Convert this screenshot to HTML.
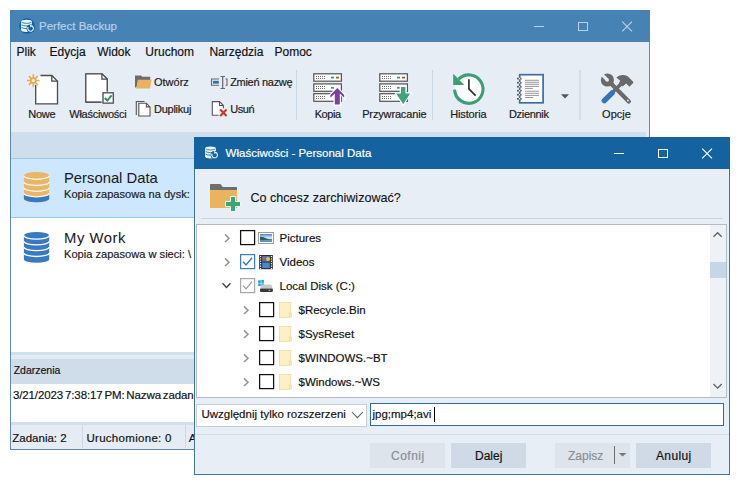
<!DOCTYPE html>
<html><head><meta charset="utf-8">
<style>
*{margin:0;padding:0;box-sizing:border-box}
html,body{width:743px;height:488px;overflow:hidden;background:#fff;font-family:"Liberation Sans",sans-serif;color:#1a1a1a}
.a{position:absolute}
.t{position:absolute;white-space:nowrap;line-height:1;font-family:"Liberation Sans",sans-serif;-webkit-text-stroke:0.18px currentColor}
svg{position:absolute;overflow:visible}
</style></head><body>

<!-- ============ MAIN WINDOW ============ -->
<div class="a" style="left:10px;top:10px;width:640px;height:440px;background:#e6edf5;border:1px solid #6489b0"></div>
<!-- title bar -->
<div class="a" style="left:10px;top:10px;width:640px;height:32px;background:#4682b4"></div>
<div class="t" style="left:39px;top:21.3px;font-size:11.5px;color:#b9d1ea">Perfect Backup</div>

<svg width="743" height="488" style="left:0;top:0">
 <rect x="534" y="26" width="10" height="1" fill="#b9d1ea"/>
 <rect x="578.5" y="22.5" width="9" height="8" fill="none" stroke="#b9d1ea" stroke-width="1"/>
 <path d="M622.2,21.6 L632,31.4 M632,21.6 L622.2,31.4" stroke="#b9d1ea" stroke-width="1.1"/>
</svg>
<!-- menu -->
<div class="t" style="left:16.5px;top:45.6px;font-size:12px;color:#111">Plik</div>
<div class="t" style="left:49.6px;top:45.6px;font-size:12px;color:#111">Edycja</div>
<div class="t" style="left:97.2px;top:45.6px;font-size:12px;color:#111">Widok</div>
<div class="t" style="left:145.3px;top:45.6px;font-size:12px;color:#111">Uruchom</div>
<div class="t" style="left:209.4px;top:45.6px;font-size:12px;color:#111">Narzędzia</div>
<div class="t" style="left:274.5px;top:45.6px;font-size:12px;color:#111">Pomoc</div>


<!-- ribbon labels -->
<div class="t" style="left:28.2px;top:108.8px;font-size:11px;letter-spacing:-0.25px;color:#1a1a1a">Nowe</div>
<div class="t" style="left:69.3px;top:108.8px;font-size:11px;letter-spacing:-0.25px;color:#1a1a1a">Właściwości</div>
<div class="t" style="left:154px;top:77.4px;font-size:11px;color:#1a1a1a">Otwórz</div>
<div class="t" style="left:154px;top:104.1px;font-size:11px;letter-spacing:-0.25px;color:#1a1a1a">Duplikuj</div>
<div class="t" style="left:230.2px;top:77.4px;font-size:11px;letter-spacing:-0.3px;color:#1a1a1a">Zmień nazwę</div>
<div class="t" style="left:230.2px;top:104.1px;font-size:11px;letter-spacing:-0.4px;color:#1a1a1a">Usuń</div>
<div class="t" style="left:314.7px;top:108.8px;font-size:11px;letter-spacing:-0.4px;color:#1a1a1a">Kopia</div>
<div class="t" style="left:362.2px;top:108.8px;font-size:11px;letter-spacing:-0.15px;color:#1a1a1a">Przywracanie</div>
<div class="t" style="left:450.2px;top:108.8px;font-size:11px;letter-spacing:-0.13px;color:#1a1a1a">Historia</div>
<div class="t" style="left:508.9px;top:108.8px;font-size:11px;letter-spacing:-0.3px;color:#1a1a1a">Dziennik</div>
<div class="t" style="left:602.1px;top:108.8px;font-size:11px;color:#1a1a1a">Opcje</div>

<!-- header strip -->
<div class="a" style="left:11px;top:132px;width:635px;height:26px;background:#cedeec"></div>
<!-- list white -->
<div class="a" style="left:11px;top:158px;width:638px;height:194px;background:#fff"></div>
<!-- selected item -->
<div class="a" style="left:11px;top:158px;width:638px;height:60px;background:#cde8fe;border-top:1px solid #99c9ef;border-bottom:1px solid #99c9ef"></div>
<div class="t" style="left:64px;top:170.5px;font-size:14.8px;-webkit-text-stroke:0.05px;color:#1a1a1a">Personal Data</div>
<div class="t" style="left:64px;top:188.6px;font-size:11.1px;color:#1a1a1a">Kopia zapasowa na dysk:</div>
<div class="t" style="left:64px;top:230.5px;font-size:14.8px;letter-spacing:0.55px;-webkit-text-stroke:0.05px;color:#1a1a1a">My Work</div>
<div class="t" style="left:64px;top:248.6px;font-size:11.1px;color:#1a1a1a">Kopia zapasowa w sieci: \</div>

<!-- splitter -->
<div class="a" style="left:11px;top:352px;width:638px;height:3px;background:#d2dfec"></div>
<div class="a" style="left:11px;top:355px;width:638px;height:4px;background:#e3ebf4"></div>
<div class="a" style="left:11px;top:359px;width:638px;height:25px;background:#cfdcea"></div>
<div class="t" style="left:13.7px;top:364.7px;font-size:10.5px;color:#111">Zdarzenia</div>
<div class="a" style="left:11px;top:384px;width:638px;height:38px;background:#fff"></div>
<div class="t" style="left:12.9px;top:390px;font-size:11.5px;letter-spacing:-0.1px;word-spacing:-1.3px;color:#111">3/21/2023 7:38:17 PM: Nazwa zadania</div>
<!-- status -->
<div class="a" style="left:11px;top:422px;width:638px;height:26px;background:#e6ecf4;border-top:3px solid #d5dfeb"></div>
<div class="t" style="left:12.3px;top:433px;font-size:11.5px;color:#111">Zadania: 2</div>
<div class="a" style="left:82px;top:425px;width:1px;height:23px;background:#cdd8e4"></div>
<div class="t" style="left:86.4px;top:433px;font-size:11.5px;letter-spacing:0.3px;color:#111">Uruchomione: 0</div>
<div class="a" style="left:185px;top:425px;width:1px;height:23px;background:#cdd8e4"></div>
<div class="t" style="left:188.7px;top:433px;font-size:11.5px;color:#111">Aktywne</div>


<!-- main window icons -->
<svg width="743" height="488" style="left:0;top:0" viewBox="0 0 743 488">
 <!-- title icon -->
 <circle cx="27" cy="26" r="7.7" fill="#12609f"/>
 <path d="M21.1,21.70 A5.4,1.9 0 0 1 31.90,21.70 L31.90,30.00 A5.4,1.9 0 0 1 21.1,30.00Z" fill="#eaf6ff"/>
 <g fill="none" stroke="#12609f" stroke-width="0.8">
  <path d="M21.70,22.30 A5.4,1.9 0 0 0 31.30,22.30"/>
  <path d="M21.70,24.90 A5.4,1.9 0 0 0 31.30,24.90"/>
  <path d="M21.70,27.60 A5.4,1.9 0 0 0 31.30,27.60"/>
 </g>
 <circle cx="30.60" cy="28.40" r="4" fill="#12609f"/>
 <path d="M32.00,25.98 A2.8,2.8 0 1 1 28.18,27.00" fill="none" stroke="#eaf6ff" stroke-width="1.1"/>
 <path d="M30.00,24.50 L32.80,25.80 L30.40,27.50Z" fill="#eaf6ff"/>

 <!-- Nowe doc -->
 <path d="M40.5,75.5 L51.8,75.5 L57.5,81.2 L57.5,103.8 L35.7,103.8 L35.7,85" fill="#fff" stroke="#4b4b4b" stroke-width="1.3"/>
 <path d="M35.7,84 L35.7,80 L40,75.5" fill="#fff" stroke="none"/>
 <path d="M51.8,75.5 L51.8,81.2 L57.5,81.2" fill="none" stroke="#4b4b4b" stroke-width="1.3"/>
 <g stroke="#e9a94c" stroke-width="1.5">
  <line x1="33.3" y1="74.2" x2="33.3" y2="86.8"/>
  <line x1="27" y1="80.5" x2="39.6" y2="80.5"/>
  <line x1="28.9" y1="76.1" x2="37.7" y2="84.9"/>
  <line x1="28.9" y1="84.9" x2="37.7" y2="76.1"/>
 </g>
 <circle cx="33.3" cy="80.5" r="3.3" fill="#e9a94c"/>
 <circle cx="33.3" cy="80.5" r="1.5" fill="#fdf6ea"/>
 <!-- Wlasciwosci doc -->
 <path d="M85.8,73.8 L101.9,73.8 L107.2,79.1 L107.2,91.5 M101.5,102 L85.8,102 L85.8,73.8" fill="#fff" stroke="#4b4b4b" stroke-width="1.3"/>
 <rect x="85.8" y="73.8" width="16" height="28.2" fill="#fff"/>
 <path d="M85.8,102 L85.8,73.8 L101.9,73.8 L107.2,79.1 L107.2,91.5" fill="#fff" stroke="#4b4b4b" stroke-width="1.3"/>
 <path d="M85.8,102 L101.5,102" stroke="#4b4b4b" stroke-width="1.3"/>
 <path d="M101.9,73.8 L101.9,79.1 L107.2,79.1" fill="none" stroke="#4b4b4b" stroke-width="1.3"/>
 <rect x="103" y="92.8" width="10.3" height="10.3" fill="#fff" stroke="#4b4b4b" stroke-width="1.3"/>
 <path d="M104.8,98 L107.3,100.6 L111.6,95.3" fill="none" stroke="#2e8d64" stroke-width="2"/>

 <!-- Otworz folder -->
 <path d="M135,87.8 L135,75.4 L141,75.4 L142.3,76.8 L150.2,76.8 L150.2,80 L135,87.8Z" fill="#6c6c6c"/>
 <path d="M137.8,79.8 L151.6,79.8 L150,88.6 L136.2,88.6Z" fill="#e8b25f"/>
 <!-- Duplikuj -->
 <path d="M136.3,115 L136.3,101.5 L144.5,101.5" fill="none" stroke="#555" stroke-width="1.1"/>
 <path d="M138.8,103.3 L146.4,103.3 L150,106.9 L150,116 L138.8,116Z" fill="#fff" stroke="#555" stroke-width="1.1"/>
 <path d="M146.4,103.3 L146.4,106.9 L150,106.9" fill="none" stroke="#555" stroke-width="1.1"/>
 <!-- Zmien nazwe -->
 <path d="M219,79 L211.5,79 L211.5,85.3 L219,85.3 M225.5,79 L227,79 L227,85.3 L225.5,85.3" fill="none" stroke="#666" stroke-width="1.1"/>
 <rect x="213" y="80.8" width="5.8" height="2.8" fill="#2f6db5"/>
 <path d="M222.7,76.5 L222.7,88.5 M220.5,76.5 L225,76.5 M220.5,88.5 L225,88.5" fill="none" stroke="#666" stroke-width="1.2"/>
 <!-- Usun -->
 <path d="M212.3,101.6 L219.5,101.6 L223.4,105.5 L223.4,108.6 L219.2,108.6 L219.2,115.2 L212.3,115.2Z" fill="#fff" stroke="none"/>
 <path d="M223.4,108.2 L223.4,105.5 L219.5,101.6 L212.3,101.6 L212.3,115.2 L218.6,115.2" fill="none" stroke="#555" stroke-width="1.1"/>
 <path d="M219.5,101.6 L219.5,105.5 L223.4,105.5" fill="none" stroke="#555" stroke-width="1.1"/>
 <path d="M220.2,109.6 L226.6,115.9 M226.6,109.6 L220.2,115.9" stroke="#c8392b" stroke-width="2.1"/>
 <!-- separators -->
 <rect x="296" y="70" width="1" height="50" fill="#c9d6e3"/>
 <rect x="432" y="70" width="1" height="50" fill="#c9d6e3"/>
 <rect x="579" y="70" width="2" height="50" fill="#d2e0ec"/>

 <!-- Kopia server -->
 <g id="srv">
  <g fill="#fff" stroke="#575757" stroke-width="1.25">
   <rect x="313.8" y="73.8" width="27.6" height="7.4"/>
   <rect x="313.8" y="83.9" width="27.6" height="7.4"/>
   <rect x="313.8" y="93.7" width="27.6" height="7.6"/>
  </g>
  <g fill="#707070"><rect x="316" y="76" width="1" height="1"/><rect x="318" y="76" width="1" height="1"/><rect x="320" y="76" width="1" height="1"/><rect x="322" y="76" width="1" height="1"/><rect x="324" y="76" width="1" height="1"/><rect x="316" y="78" width="1" height="1"/><rect x="318" y="78" width="1" height="1"/><rect x="320" y="78" width="1" height="1"/><rect x="322" y="78" width="1" height="1"/><rect x="324" y="78" width="1" height="1"/><rect x="316" y="86" width="1" height="1"/><rect x="318" y="86" width="1" height="1"/><rect x="320" y="86" width="1" height="1"/><rect x="322" y="86" width="1" height="1"/><rect x="324" y="86" width="1" height="1"/><rect x="316" y="88" width="1" height="1"/><rect x="318" y="88" width="1" height="1"/><rect x="320" y="88" width="1" height="1"/><rect x="322" y="88" width="1" height="1"/><rect x="324" y="88" width="1" height="1"/><rect x="316" y="96" width="1" height="1"/><rect x="318" y="96" width="1" height="1"/><rect x="320" y="96" width="1" height="1"/><rect x="322" y="96" width="1" height="1"/><rect x="324" y="96" width="1" height="1"/><rect x="316" y="98" width="1" height="1"/><rect x="318" y="98" width="1" height="1"/><rect x="320" y="98" width="1" height="1"/><rect x="322" y="98" width="1" height="1"/><rect x="324" y="98" width="1" height="1"/></g>
  <rect x="331" y="76.7" width="3" height="1.8" fill="#3e9a74"/>
  <rect x="336" y="76.7" width="3" height="1.8" fill="#b5553a"/>
  <rect x="331" y="86.9" width="3" height="1.8" fill="#3e9a74"/>
 </g>
 <path d="M337.3,87.5 L344.8,95.2 L344.8,98.5 L340.3,94 L340.3,105 L334.3,105 L334.3,94 L329.8,98.5 L329.8,95.2Z" fill="#fff" stroke="#fff" stroke-width="1.6"/>
 <path d="M337.3,87.9 L344.2,95 L344.2,97.8 L339.8,93.6 L339.8,104.6 L334.8,104.6 L334.8,93.6 L330.4,97.8 L330.4,95Z" fill="#7d3fa3"/>

 <!-- Przywracanie server -->
 <use href="#srv" x="66" y="0"/>
 <path d="M400.5,86.5 L406,86.5 L406,93 L410.8,93 L403.2,104.7 L395.6,93 L400.5,93Z" fill="#fff" stroke="#fff" stroke-width="1.6"/>
 <path d="M401,87 L405.4,87 L405.4,93.4 L410.2,93.4 L403.2,104.2 L396.2,93.4 L401,93.4Z" fill="#3fa67a"/>

 <!-- Historia clock -->
 <circle cx="468.8" cy="88.6" r="13.5" fill="#fff"/>
 <path d="M458.6,79.2 A14.2,14.2 0 1 1 454.6,89.6" fill="none" stroke="#38a071" stroke-width="3.1"/>
 <path d="M453.2,73.8 L464.4,84.9 L453.2,84.9Z" fill="#38a071"/>
 <path d="M468.9,79.3 L468.9,88.8 L475.6,95.6" fill="none" stroke="#333" stroke-width="1.7"/>
 <!-- Dziennik -->
 <rect x="519.7" y="74.7" width="23.4" height="28.1" fill="#fff" stroke="#3a6ea8" stroke-width="1.7"/>
 <g fill="#555">
  <rect x="517" y="77.8" width="4.6" height="1.6"/><rect x="517" y="81.9" width="4.6" height="1.6"/>
  <rect x="517" y="85.9" width="4.6" height="1.6"/><rect x="517" y="89.9" width="4.6" height="1.6"/>
  <rect x="517" y="93.9" width="4.6" height="1.6"/><rect x="517" y="98" width="4.6" height="1.6"/>
 </g>
 <g fill="#fff">
  <circle cx="519.5" cy="78.6" r="0.8"/><circle cx="519.5" cy="82.7" r="0.8"/><circle cx="519.5" cy="86.7" r="0.8"/>
  <circle cx="519.5" cy="90.7" r="0.8"/><circle cx="519.5" cy="94.7" r="0.8"/><circle cx="519.5" cy="98.8" r="0.8"/>
 </g>
 <g fill="#8a8a8a">
  <rect x="525" y="79.8" width="14" height="0.9"/><rect x="525" y="81.8" width="14" height="0.9"/>
  <rect x="525" y="83.8" width="14" height="0.9"/><rect x="525" y="85.9" width="14" height="0.9"/>
  <rect x="525" y="87.9" width="8" height="0.9"/>
  <rect x="525" y="90.7" width="14" height="0.9"/><rect x="525" y="92.8" width="14" height="0.9"/>
  <rect x="525" y="94.9" width="14" height="0.9"/><rect x="525" y="97.1" width="8" height="0.9"/>
 </g>
 <path d="M561,94.3 L569,94.3 L565,98.6Z" fill="#555"/>

 <!-- Opcje tools -->
 <path d="M621.5,83.5 L613.4,91.6" stroke="#6a6a6a" stroke-width="3.6"/>
 <path d="M612.2,92.8 L604.3,100.7" stroke="#3573ba" stroke-width="5.4" stroke-linecap="round"/>
 <path d="M616.3,77.6 Q621.8,73.2 628,76.6 L633.2,81.8 Q633.6,82.6 632.9,83.3 L629.4,86.8 L626.2,83.6 L622.6,86.6 L618.9,82.9 L620.3,80.8 Z" fill="#6a6a6a"/>
 <path d="M609.5,82 L628.8,101.4" stroke="#6a6a6a" stroke-width="4.3" stroke-linecap="round"/>
 <circle cx="607.4" cy="80" r="6.6" fill="#6a6a6a"/>
 <path d="M608.4,78.8 L602.6,73 L600.3,75.3 L606.1,81.1Z" fill="#e6edf5"/>
 <circle cx="607.2" cy="80" r="1.8" fill="#e6edf5"/>
 <circle cx="627.9" cy="100.5" r="0.9" fill="#e6edf5"/>

 <!-- list DB icons -->
 <path d="M23.9,175.5 A12.65,3.6 0 0 1 49.2,175.5 L49.2,198.6 A12.65,3.6 0 0 1 23.9,198.6Z" fill="#e9b566"/>
 <path d="M23.9,193.2 A12.65,3.6 0 0 0 49.2,193.2 L49.2,198.6 A12.65,3.6 0 0 1 23.9,198.6Z" fill="#3879c1"/>
 <g fill="none" stroke="#fdf8ee" stroke-width="1.3">
  <path d="M23.9,175.7 A12.65,3.6 0 0 0 49.2,175.7"/>
  <path d="M23.9,181.9 A12.65,3.6 0 0 0 49.2,181.9"/>
  <path d="M23.9,187.7 A12.65,3.6 0 0 0 49.2,187.7"/>
  <path d="M23.9,193.2 A12.65,3.6 0 0 0 49.2,193.2"/>
 </g>
 <path d="M23.9,235.5 A12.65,3.6 0 0 1 49.2,235.5 L49.2,259.2 A12.65,3.6 0 0 1 23.9,259.2Z" fill="#3879c1"/>
 <g fill="none" stroke="#fff" stroke-width="1.3">
  <path d="M23.9,235.5 A12.65,3.6 0 0 0 49.2,235.5"/>
  <path d="M23.9,241.3 A12.65,3.6 0 0 0 49.2,241.3"/>
  <path d="M23.9,247.1 A12.65,3.6 0 0 0 49.2,247.1"/>
  <path d="M23.9,252.9 A12.65,3.6 0 0 0 49.2,252.9"/>
 </g>
</svg>

<!-- ============ DIALOG ============ -->
<div class="a" style="left:194px;top:137px;width:536px;height:338px;background:#e8eef6;border:1px solid #41709f;box-shadow:inset 1px 0 0 #e4f6ff,inset 0 -1px 0 #e4f6ff,inset -1px 0 0 #e4f6ff"></div>
<div class="a" style="left:194px;top:137px;width:536px;height:32px;background:#1562a0"></div>
<div class="t" style="left:225.6px;top:147.8px;font-size:11.5px;color:#fff">Właściwości - Personal Data</div>
<div class="t" style="left:250.4px;top:192.1px;font-size:12.6px;-webkit-text-stroke:0.1px;color:#111">Co chcesz zarchiwizować?</div>
<div class="a" style="left:201px;top:218px;width:522px;height:1px;background:#c9d5e3"></div>
<!-- tree -->
<div class="a" style="left:196px;top:224px;width:531px;height:174px;background:#fff;border:1px solid #b4bcc6"></div>
<div class="a" style="left:710px;top:225px;width:16px;height:172px;background:#eef2f7"></div>
<div class="a" style="left:710px;top:262px;width:16px;height:16px;background:#c5d6e8"></div>
<!-- combo + input -->
<div class="a" style="left:196px;top:404px;width:171px;height:23px;background:#fff;border:1px solid #c6ced8"></div>
<div class="t" style="left:201.4px;top:409px;font-size:11.5px;color:#111">Uwzględnij tylko rozszerzeni</div>
<div class="a" style="left:370px;top:403px;width:354px;height:23px;background:#fff;border:1px solid #2a6ab0"></div>
<div class="t" style="left:372.5px;top:409px;font-size:11.5px;color:#111">jpg;mp4;avi</div>

<div class="a" style="left:195px;top:434px;width:534px;height:1px;background:#d3dde8"></div>
<!-- buttons -->
<div class="a" style="left:370px;top:443px;width:75px;height:25px;background:#dde4ec"></div>
<div class="t" style="left:391px;top:450px;font-size:12px;letter-spacing:0.5px;color:#8a8f96">Cofnij</div>
<div class="a" style="left:451px;top:443px;width:75px;height:25px;background:#cfdae6"></div>
<div class="t" style="left:475px;top:450px;font-size:12px;color:#111">Dalej</div>
<div class="a" style="left:555px;top:443px;width:75px;height:25px;background:#dde4ec"></div>
<div class="t" style="left:568px;top:450px;font-size:12px;color:#8a8f96">Zapisz</div>
<div class="a" style="left:636px;top:443px;width:75px;height:25px;background:#cfdae6"></div>
<div class="t" style="left:656px;top:450px;font-size:12px;letter-spacing:0.35px;color:#111">Anuluj</div>



<svg width="743" height="488" style="left:0;top:0" viewBox="0 0 743 488">
 <!-- dialog title icon -->
 <path d="M205.1,148.30 A5.4,1.9 0 0 1 215.90,148.30 L215.90,156.60 A5.4,1.9 0 0 1 205.1,156.60Z" fill="#eaf6ff"/>
 <g fill="none" stroke="#1562a0" stroke-width="0.8">
  <path d="M205.70,148.90 A5.4,1.9 0 0 0 215.30,148.90"/>
  <path d="M205.70,151.50 A5.4,1.9 0 0 0 215.30,151.50"/>
  <path d="M205.70,154.20 A5.4,1.9 0 0 0 215.30,154.20"/>
 </g>
 <circle cx="214.60" cy="155.00" r="4" fill="#1562a0"/>
 <path d="M216.00,152.58 A2.8,2.8 0 1 1 212.18,153.60" fill="none" stroke="#eaf6ff" stroke-width="1.1"/>
 <path d="M214.00,151.10 L216.80,152.40 L214.40,154.10Z" fill="#eaf6ff"/>
 <!-- title buttons -->
 <rect x="614" y="153" width="10" height="1" fill="#fff"/>
 <rect x="658.5" y="149.5" width="9" height="8" fill="none" stroke="#fff" stroke-width="1"/>
 <path d="M702.2,148.6 L712,158.4 M712,148.6 L702.2,158.4" stroke="#fff" stroke-width="1.1"/>
 <!-- header folder -->
 <path d="M210,190 L210,184.7 Q210,184 210.7,184 L220.4,184 L222.8,186.9 L236.3,186.9 Q237,186.9 237,187.6 L237,190Z" fill="#6e6e6e"/>
 <rect x="210" y="190" width="27" height="18" fill="#e9b35f"/>
 <path d="M230.5,196.5 L235.5,196.5 L235.5,201.5 L240.5,201.5 L240.5,206.5 L235.5,206.5 L235.5,211.5 L230.5,211.5 L230.5,206.5 L225.5,206.5 L225.5,201.5 L230.5,201.5Z" fill="#3aa57a" stroke="#e8f8f0" stroke-width="1"/>
 <!-- scrollbar arrows -->
 <path d="M713.5,236.8 L717.6,232.7 L721.7,236.8" fill="none" stroke="#606060" stroke-width="1.3"/>
 <path d="M713.5,384 L717.6,388.1 L721.7,384" fill="none" stroke="#606060" stroke-width="1.3"/>
 <!-- combo chevron -->
 <path d="M352,412.2 L357.4,417.6 L362.8,412.2" fill="none" stroke="#666" stroke-width="1.1"/>
 <!-- caret -->
 <rect x="434" y="407" width="1" height="15" fill="#000"/>
 <!-- zapisz split -->
 <rect x="614" y="446" width="1" height="18" fill="#6f6f6f"/>
 <path d="M618.8,453 L626.4,453 L622.6,456.6Z" fill="#777"/>
<path d="M225.0,234.4 L229.0,238.2 L225.0,242.0" fill="none" stroke="#939393" stroke-width="1.5"/>
 <rect x="240.6" y="230.6" width="14" height="14" fill="#fff" stroke="#111" stroke-width="1.25"/>
 <defs><linearGradient id="sky" x1="0" y1="0" x2="0" y2="1"><stop offset="0" stop-color="#4a86d6"/><stop offset="0.45" stop-color="#c8e6f4"/><stop offset="1" stop-color="#b9d8ea"/></linearGradient></defs>
 <rect x="258.5" y="232.5" width="15" height="11" fill="#fff" stroke="#9c9c9c" stroke-width="1"/>
 <rect x="260" y="234" width="12" height="8" fill="url(#sky)"/>
 <path d="M260,236.8 Q263.5,236.2 266,238.3 Q268.5,239.6 272,239.2 L272,240.2 L260,240.6Z" fill="#2f6455"/>
 <rect x="260" y="240.2" width="12" height="1.8" fill="#5f90bf"/>
 <path d="M225.0,258.4 L229.0,262.2 L225.0,266.0" fill="none" stroke="#939393" stroke-width="1.5"/>
 <rect x="240.6" y="254.6" width="14" height="14" fill="#fff" stroke="#3b80c6" stroke-width="1.25"/>
 <path d="M243.0,261.7 L246.0,264.9 L252.1,257.7" fill="none" stroke="#2f78c4" stroke-width="1.4"/>
 <rect x="259.2" y="255.0" width="13.6" height="14.2" fill="#2b2b2b"/>
 <rect x="262.2" y="256.0" width="7.6" height="5.6" fill="#3f77c0"/>
 <rect x="262.2" y="262.5" width="7.6" height="5.6" fill="#4a86cc"/>
 <circle cx="268" cy="259.0" r="2" fill="#e6c633"/>
 <rect x="262.4" y="257.5" width="2.5" height="2" fill="#d55"/>
 <rect x="260" y="255.9" width="1.2" height="1.2" fill="#fff"/><rect x="270.8" y="255.9" width="1.2" height="1.2" fill="#fff"/>
 <rect x="260" y="258.3" width="1.2" height="1.2" fill="#fff"/><rect x="270.8" y="258.3" width="1.2" height="1.2" fill="#fff"/>
 <rect x="260" y="260.7" width="1.2" height="1.2" fill="#fff"/><rect x="270.8" y="260.7" width="1.2" height="1.2" fill="#fff"/>
 <rect x="260" y="263.1" width="1.2" height="1.2" fill="#fff"/><rect x="270.8" y="263.1" width="1.2" height="1.2" fill="#fff"/>
 <rect x="260" y="265.5" width="1.2" height="1.2" fill="#fff"/><rect x="270.8" y="265.5" width="1.2" height="1.2" fill="#fff"/>
 <rect x="260" y="267.9" width="1.2" height="1.2" fill="#fff"/><rect x="270.8" y="267.9" width="1.2" height="1.2" fill="#fff"/>
 <path d="M222.5,283.3 L226.5,287.5 L230.5,283.3" fill="none" stroke="#404040" stroke-width="1.4"/>
 <rect x="240.6" y="278.6" width="14" height="14" fill="#fff" stroke="#a8a8a8" stroke-width="1.25"/>
 <path d="M243.0,285.7 L246.0,288.9 L252.1,281.7" fill="none" stroke="#9c9c9c" stroke-width="1.2"/>
 <g fill="#1aa3e6"><rect x="258.2" y="280.3" width="2.6" height="2.6"/><rect x="261.3" y="279.9" width="2.6" height="3"/><rect x="258.2" y="283.4" width="2.6" height="2.6"/><rect x="261.3" y="283.4" width="2.6" height="2.8"/></g>
 <path d="M262,284.5 L271,284.5 L272.8,288.5 L260,288.5Z" fill="#c9c9c9"/>
 <rect x="260" y="288.5" width="12.8" height="3.6" rx="0.8" fill="#3a3a3a"/>
 <rect x="268.6" y="289.7" width="1.6" height="1.3" fill="#5fe04a"/>
 <path d="M244.0,306.4 L248.0,310.2 L244.0,314.0" fill="none" stroke="#939393" stroke-width="1.5"/>
 <rect x="259.6" y="302.6" width="14" height="14" fill="#fff" stroke="#111" stroke-width="1.25"/>
 <rect x="279.5" y="302.5" width="11" height="15" fill="#fcf0c4" stroke="#f0dfa8" stroke-width="0.9"/><rect x="289.3" y="312.9" width="2.2" height="4.2" fill="#fbeebd" stroke="#efdca6" stroke-width="0.7"/>
 <path d="M244.0,330.4 L248.0,334.2 L244.0,338.0" fill="none" stroke="#939393" stroke-width="1.5"/>
 <rect x="259.6" y="326.6" width="14" height="14" fill="#fff" stroke="#111" stroke-width="1.25"/>
 <rect x="279.5" y="326.5" width="11" height="15" fill="#fcf0c4" stroke="#f0dfa8" stroke-width="0.9"/><rect x="289.3" y="336.9" width="2.2" height="4.2" fill="#fbeebd" stroke="#efdca6" stroke-width="0.7"/>
 <path d="M244.0,354.4 L248.0,358.2 L244.0,362.0" fill="none" stroke="#939393" stroke-width="1.5"/>
 <rect x="259.6" y="350.6" width="14" height="14" fill="#fff" stroke="#111" stroke-width="1.25"/>
 <rect x="279.5" y="350.5" width="11" height="15" fill="#fcf0c4" stroke="#f0dfa8" stroke-width="0.9"/><rect x="289.3" y="360.9" width="2.2" height="4.2" fill="#fbeebd" stroke="#efdca6" stroke-width="0.7"/>
 <path d="M244.0,378.4 L248.0,382.2 L244.0,386.0" fill="none" stroke="#939393" stroke-width="1.5"/>
 <rect x="259.6" y="374.6" width="14" height="14" fill="#fff" stroke="#111" stroke-width="1.25"/>
 <rect x="279.5" y="374.5" width="11" height="15" fill="#fcf0c4" stroke="#f0dfa8" stroke-width="0.9"/><rect x="289.3" y="384.9" width="2.2" height="4.2" fill="#fbeebd" stroke="#efdca6" stroke-width="0.7"/>
</svg>
<div class="t" style="left:279.5px;top:232.77px;font-size:11.5px;color:#111">Pictures</div>
<div class="t" style="left:279.5px;top:256.77px;font-size:11.5px;color:#111">Videos</div>
<div class="t" style="left:279.5px;top:280.77px;font-size:11.5px;color:#111">Local Disk (C:)</div>
<div class="t" style="left:298.5px;top:304.77px;font-size:11.5px;color:#111">$Recycle.Bin</div>
<div class="t" style="left:298.5px;top:328.77px;font-size:11.5px;color:#111">$SysReset</div>
<div class="t" style="left:298.5px;top:352.77px;font-size:11.5px;color:#111">$WINDOWS.~BT</div>
<div class="t" style="left:298.5px;top:376.77px;font-size:11.5px;color:#111">$Windows.~WS</div>

</body></html>
